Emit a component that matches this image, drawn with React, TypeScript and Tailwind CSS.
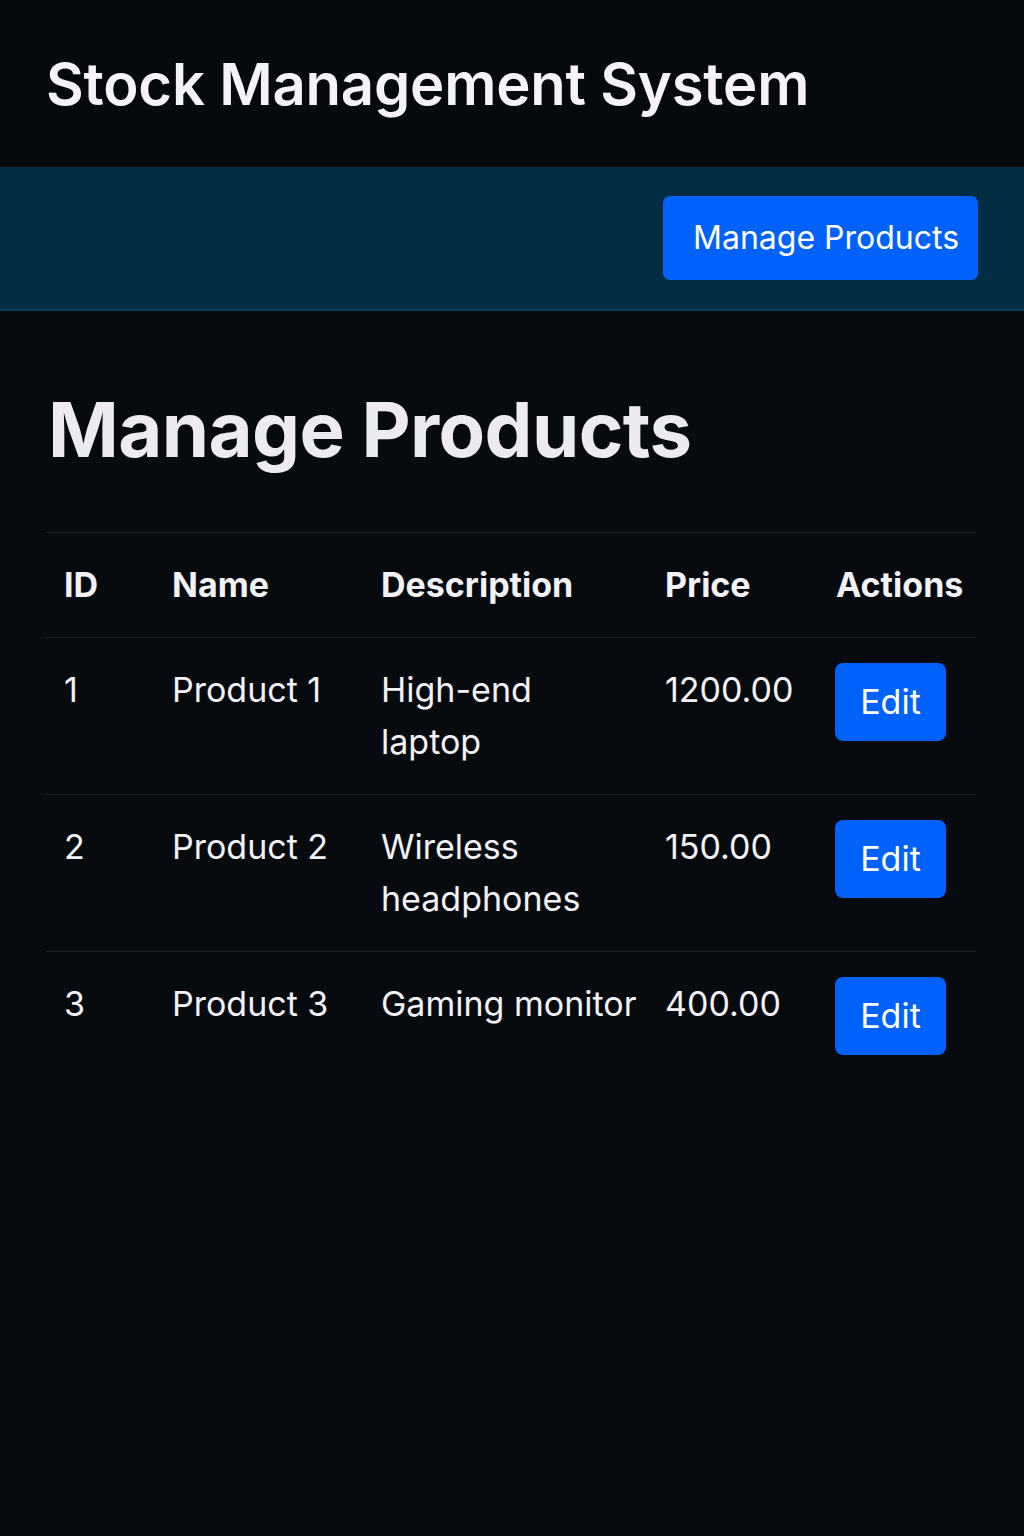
import React from "react";

const rows = [
  { id: 1, name: "Product 1", desc: "High-end laptop", price: "1200.00" },
  { id: 2, name: "Product 2", desc: "Wireless headphones", price: "150.00" },
  { id: 3, name: "Product 3", desc: "Gaming monitor", price: "400.00" },
];

export default function App() {
  return (
    <div
      className="min-h-[1536px] w-full bg-[#070a0f] text-[#f2f2f6]"
      style={{ fontFamily: "Inter, 'Noto Sans', sans-serif" }}
    >
      <header className="h-[167px] bg-[#06090d] flex items-center px-[46px]">
        <h1 className="text-[58px] font-semibold leading-none tracking-[-0.2px] text-[#f4f4f8]">
          Stock Management System
        </h1>
      </header>
      <nav className="h-[144px] bg-[#032d42] border-b-2 border-[#0a3a52] flex items-center justify-end pr-[46px]">
        <button className="h-[84px] w-[315px] rounded-[7px] bg-[#0062fb] text-white text-[32px] font-normal leading-none text-left pl-[30px]">
          Manage Products
        </button>
      </nav>
      <main className="px-[46px] pt-[80px]">
        <h2 className="text-[76px] font-bold leading-none text-[#ebebf0] tracking-[-0.6px] pl-[2px]">
          Manage Products
        </h2>
        <table className="mt-[65px] w-[930px] border-collapse table-fixed text-[34px] leading-[52px]">
          <colgroup>
            <col className="w-[108px]" />
            <col className="w-[209px]" />
            <col className="w-[284px]" />
            <col className="w-[171px]" />
            <col className="w-[158px]" />
          </colgroup>
          <thead>
            <tr className="border-t border-b border-[#1c2027]">
              <th className="text-left font-bold pl-[18px] pr-[4px] py-[26px]">ID</th>
              <th className="text-left font-bold pl-[18px] pr-[4px] py-[26px]">Name</th>
              <th className="text-left font-bold pl-[18px] pr-[4px] py-[26px]">Description</th>
              <th className="text-left font-bold pl-[18px] pr-[4px] py-[26px]">Price</th>
              <th className="text-left font-bold pl-[18px] pr-[4px] py-[26px] whitespace-nowrap">Actions</th>
            </tr>
          </thead>
          <tbody>
            {rows.map((r, i) => (
              <tr
                key={r.id}
                className={i < rows.length - 1 ? "border-b border-[#1c2027]" : ""}
              >
                <td className="align-top pl-[18px] pr-[4px] py-[26px]">{r.id}</td>
                <td className="align-top pl-[18px] pr-[4px] py-[26px] whitespace-nowrap">{r.name}</td>
                <td className="align-top pl-[18px] pr-[4px] py-[26px]">
                  <div className="max-w-[257px]">{r.desc}</div>
                </td>
                <td className="align-top pl-[18px] pr-[4px] py-[26px] whitespace-nowrap">{r.price}</td>
                <td className="align-top pl-[17px] pr-[4px] pt-[25px] pb-[26px]">
                  <button className="h-[78px] w-[111px] rounded-[8px] bg-[#0062fb] text-white text-[34px] leading-none">
                    Edit
                  </button>
                </td>
              </tr>
            ))}
          </tbody>
        </table>
      </main>
    </div>
  );
}
